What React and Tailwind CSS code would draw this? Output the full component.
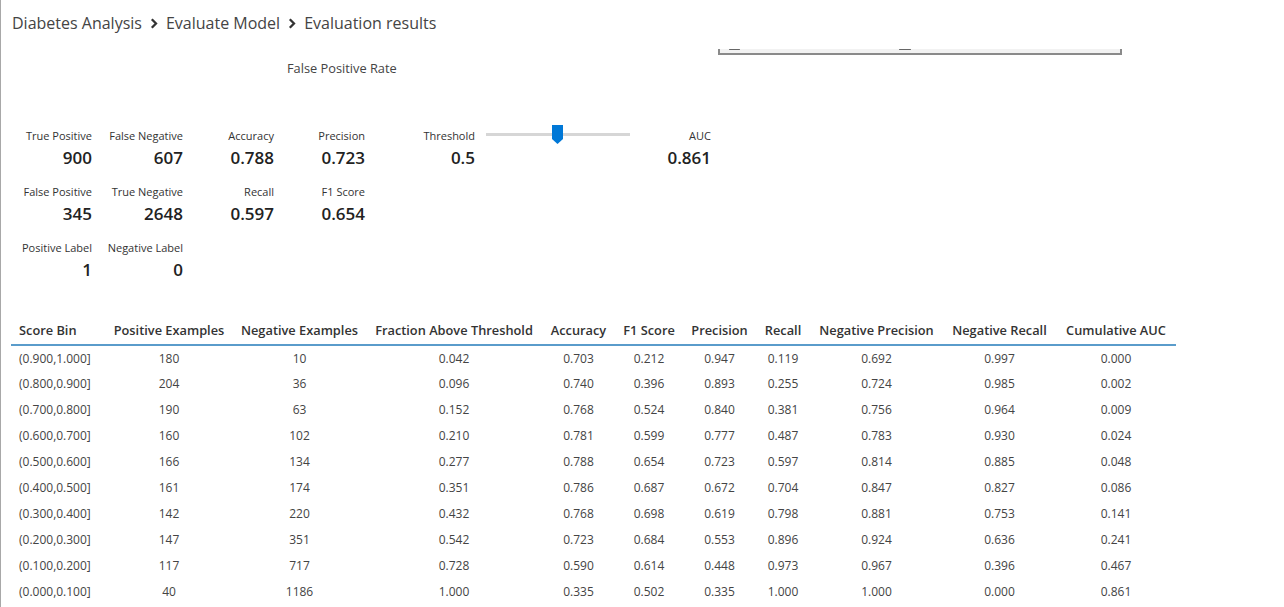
import React from "react";

const font = { fontFamily: '"Open Sans", "Noto Sans", sans-serif' };

const metricRows = [
  [
    { label: "True Positive", value: "900" },
    { label: "False Negative", value: "607" },
    { label: "Accuracy", value: "0.788" },
    { label: "Precision", value: "0.723" },
  ],
  [
    { label: "False Positive", value: "345" },
    { label: "True Negative", value: "2648" },
    { label: "Recall", value: "0.597" },
    { label: "F1 Score", value: "0.654" },
  ],
  [
    { label: "Positive Label", value: "1" },
    { label: "Negative Label", value: "0" },
  ],
];

const columns = [
  { name: "Score Bin", width: "w-[94px]", left: true },
  { name: "Positive Examples", width: "w-[128px]" },
  { name: "Negative Examples", width: "w-[133px]" },
  { name: "Fraction Above Threshold", width: "w-[176px]" },
  { name: "Accuracy", width: "w-[73px]" },
  { name: "F1 Score", width: "w-[68px]" },
  { name: "Precision", width: "w-[73px]" },
  { name: "Recall", width: "w-[54px]" },
  { name: "Negative Precision", width: "w-[133px]" },
  { name: "Negative Recall", width: "w-[113px]" },
  { name: "Cumulative AUC", width: "w-[120px]" },
];

const rows = [
  ["(0.900,1.000]", "180", "10", "0.042", "0.703", "0.212", "0.947", "0.119", "0.692", "0.997", "0.000"],
  ["(0.800,0.900]", "204", "36", "0.096", "0.740", "0.396", "0.893", "0.255", "0.724", "0.985", "0.002"],
  ["(0.700,0.800]", "190", "63", "0.152", "0.768", "0.524", "0.840", "0.381", "0.756", "0.964", "0.009"],
  ["(0.600,0.700]", "160", "102", "0.210", "0.781", "0.599", "0.777", "0.487", "0.783", "0.930", "0.024"],
  ["(0.500,0.600]", "166", "134", "0.277", "0.788", "0.654", "0.723", "0.597", "0.814", "0.885", "0.048"],
  ["(0.400,0.500]", "161", "174", "0.351", "0.786", "0.687", "0.672", "0.704", "0.847", "0.827", "0.086"],
  ["(0.300,0.400]", "142", "220", "0.432", "0.768", "0.698", "0.619", "0.798", "0.881", "0.753", "0.141"],
  ["(0.200,0.300]", "147", "351", "0.542", "0.723", "0.684", "0.553", "0.896", "0.924", "0.636", "0.241"],
  ["(0.100,0.200]", "117", "717", "0.728", "0.590", "0.614", "0.448", "0.973", "0.967", "0.396", "0.467"],
  ["(0.000,0.100]", "40", "1186", "1.000", "0.335", "0.502", "0.335", "1.000", "1.000", "0.000", "0.861"],
];

function Chevron() {
  return (
    <svg width="8" height="11" viewBox="0 0 8 11" className="mx-[8px] mt-[1px]">
      <path d="M1.8 1.2 L6 5.5 L1.8 9.8" fill="none" stroke="#333" strokeWidth="2.3" />
    </svg>
  );
}

function Metric({ label, value, width = "w-[91px]" }) {
  return (
    <div className={`${width} text-right`}>
      <div className="text-[11px] leading-[16px] text-[#333]">{label}</div>
      <div className="text-[17px] leading-[28px] font-semibold text-[#222]">{value}</div>
    </div>
  );
}

export default function App() {
  return (
    <div className="min-h-[607px] bg-white border-l border-[#a8a8a8]" style={font}>
      {/* Breadcrumb */}
      <div className="h-[45px] flex items-center pl-[11px] text-[16px] text-[#444]">
        <span>Diabetes Analysis</span>
        <Chevron />
        <span>Evaluate Model</span>
        <Chevron />
        <span>Evaluation results</span>
      </div>

      {/* bottom edge of the ROC chart, scrolled out of view */}
      <div className="relative ml-[717px] mt-[4px] w-[404px] h-[6px] bg-[#f2f2f2] border-x-2 border-b-2 border-[#8a8a8a]">
        <div className="absolute left-[9px] top-0 w-[11px] h-[1px] rounded-full bg-[#666]" />
        <div className="absolute left-[179px] top-0 w-[12px] h-[1px] rounded-full bg-[#666]" />
      </div>

      <div className="ml-[286px] mt-[5px] text-[12.8px] leading-[16px] text-[#444]">False Positive Rate</div>

      {/* Summary metrics */}
      <div className="mt-[52px] flex flex-col gap-[12px]">
        <div className="flex">
          {metricRows[0].map((m) => (
            <Metric key={m.label} {...m} />
          ))}
          <Metric label="Threshold" value="0.5" width="w-[110px]" />
          <div className="relative ml-[11px] -mt-[3px] w-[144px] h-[19px]">
            <div className="absolute left-0 right-0 top-[8px] h-[3px] bg-[#d6d6d6]" />
            <svg className="absolute left-[66px] top-0" width="11" height="19" viewBox="0 0 11 19">
              <path d="M0 0 H11 V14 L5.5 19 L0 14 Z" fill="#0078d7" />
            </svg>
          </div>
          <Metric label="AUC" value="0.861" width="w-[81px]" />
        </div>
        {metricRows.slice(1).map((row, i) => (
          <div key={i} className="flex">
            {row.map((m) => (
              <Metric key={m.label} {...m} />
            ))}
          </div>
        ))}
      </div>

      {/* Score bin table */}
      <div className="ml-[10px] mt-[34px]">
        <table className="table-fixed border-collapse w-[1165px]">
          <thead>
            <tr className="border-b-2 border-[#5a9ccb]">
              {columns.map((c) => (
                <th
                  key={c.name}
                  className={`${c.width} h-[27px] px-0 whitespace-nowrap text-[12.8px] font-semibold text-[#333] ${
                    c.left ? "text-left pl-[8px]" : "text-center"
                  }`}
                >
                  {c.name}
                </th>
              ))}
            </tr>
          </thead>
          <tbody>
            {rows.map((r) => (
              <tr key={r[0]} className="h-[26px]">
                {r.map((cell, j) => (
                  <td
                    key={j}
                    className={`text-[12px] text-[#444] p-0 ${j === 0 ? "text-left pl-[8px]" : "text-center"}`}
                  >
                    {cell}
                  </td>
                ))}
              </tr>
            ))}
          </tbody>
        </table>
      </div>
    </div>
  );
}
